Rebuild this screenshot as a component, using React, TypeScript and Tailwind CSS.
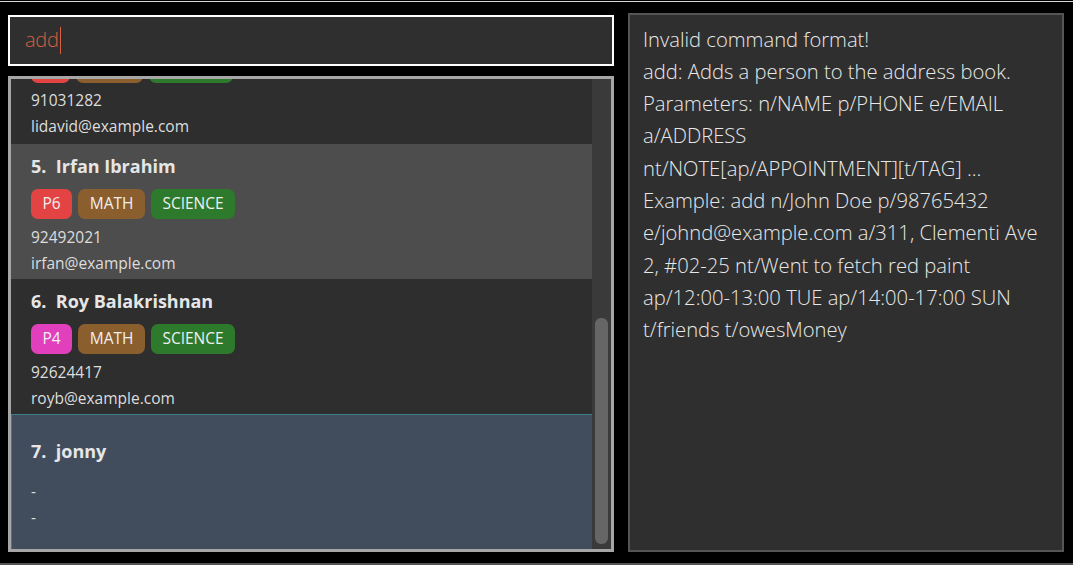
import React, {FC} from "react";

type Tag = {label: string; color: string};

type Person = {
    index: number;
    name: string;
    tags: Tag[];
    phone: string;
    email: string;
    bg: string;
};

const red = "bg-[#e34343]";
const brown = "bg-[#8b5e2e]";
const green = "bg-[#2d7a2d]";
const pink = "bg-[#e23fbc]";

const people: Person[] = [
    {
        index: 5,
        name: "Irfan Ibrahim",
        tags: [
            {label: "P6", color: red},
            {label: "MATH", color: brown},
            {label: "SCIENCE", color: green},
        ],
        phone: "92492021",
        email: "irfan@example.com",
        bg: "bg-[#4d4d4d]",
    },
    {
        index: 6,
        name: "Roy Balakrishnan",
        tags: [
            {label: "P4", color: pink},
            {label: "MATH", color: brown},
            {label: "SCIENCE", color: green},
        ],
        phone: "92624417",
        email: "royb@example.com",
        bg: "bg-[#2e2e2e]",
    },
];

const resultLines = [
    "Invalid command format!",
    "add: Adds a person to the address book.",
    "Parameters: n/NAME p/PHONE e/EMAIL",
    "a/ADDRESS",
    "nt/NOTE[ap/APPOINTMENT][t/TAG] ...",
    "Example: add n/John Doe p/98765432",
    "e/johnd@example.com a/311, Clementi Ave",
    "2, #02-25 nt/Went to fetch red paint",
    "ap/12:00-13:00 TUE ap/14:00-17:00 SUN",
    "t/friends t/owesMoney",
];

const TagRow: FC<{tags: Tag[]; className?: string}> = ({tags, className = ""}) => (
    <div className={`flex gap-[6px] ${className}`}>
        {tags.map((t) => (
            <span
                key={t.label}
                className={`${t.color} h-[30px] px-[11.5px] rounded-[7px] text-[15.5px] text-[#f0f0f0] flex items-center`}
            >
                {t.label}
            </span>
        ))}
    </div>
);

const PersonCard: FC<Person> = ({index, name, tags, phone, email, bg}) => (
    <div className={`${bg} h-[135px] shrink-0 pl-[20px] pt-[9px]`}>
        <div className="text-[18px] font-bold text-[#e6e6e6] leading-[26px]">
            {index}.&nbsp;&nbsp;{name}
        </div>
        <TagRow tags={tags} className="mt-[10px]" />
        <div className="text-[15.5px] text-[#dddddd] leading-[26px] mt-[5px]">{phone}</div>
        <div className="text-[15.5px] text-[#dddddd] leading-[26px]">{email}</div>
    </div>
);

// card 4 is scrolled mostly out of view: only the bottom of its tags shows
const PartialCard: FC = () => (
    <div className="h-[65px] shrink-0 bg-[#2e2e2e] pl-[20px] overflow-hidden">
        <div className="h-[4px] overflow-hidden flex flex-col justify-end">
            <div className="flex gap-[6px] shrink-0">
                <span className={`${red} h-[30px] w-[39px] rounded-[7px]`} />
                <span className={`${brown} h-[30px] w-[67px] rounded-[7px]`} />
                <span className={`${green} h-[30px] w-[84px] rounded-[7px]`} />
            </div>
        </div>
        <div className="text-[15.5px] text-[#dddddd] leading-[26px] mt-[4px]">91031282</div>
        <div className="text-[15.5px] text-[#dddddd] leading-[26px]">lidavid@example.com</div>
    </div>
);

const App: FC = () => {
    return (
        <div className="w-[1073px] h-[565px] bg-black flex flex-col overflow-hidden font-['Open_Sans','Noto_Sans',sans-serif]">
            <div className="h-[1px] bg-black" />
            <div className="h-[2px] bg-[#d8d8d8]" />
            <div className="flex-1 flex pl-[8px] pr-[9px] pt-[11px] pb-[11px] gap-[14px]">
                {/* left column */}
                <div className="w-[606px] flex flex-col">
                    <div className="h-[51px] mt-[2px] border-2 border-white bg-[#2f2f2f] flex items-center pl-[15px]">
                        <span className="text-[20px] font-light text-[#d8603f] tracking-[-0.3px]">add</span>
                        <span className="w-[1px] h-[27px] bg-[#d8603f] ml-[1px]" />
                    </div>
                    <div className="flex-1 mt-[10px] border-[3px] border-[#a6a6a6] bg-[#2e2e2e] flex overflow-hidden">
                        <div className="flex-1 overflow-hidden flex flex-col">
                            <PartialCard />
                            {people.map((p) => (
                                <PersonCard key={p.index} {...p} />
                            ))}
                            <div className="h-[135px] shrink-0 bg-[#414d5d] border-t border-l border-[#3e7d8b] pl-[19px] pt-[23px]">
                                <div className="text-[18px] font-bold text-[#e6e6e6] leading-[26px]">
                                    7.&nbsp;&nbsp;jonny
                                </div>
                                <div className="text-[15.5px] text-[#dddddd] leading-[26px] mt-[14px]">-</div>
                                <div className="text-[15.5px] text-[#dddddd] leading-[26px]">-</div>
                            </div>
                        </div>
                        <div className="w-[19px] bg-[#3a3a3a] flex flex-col pt-[239px] pb-[5px] px-[3px]">
                            <div className="flex-1 rounded-[6px] bg-[#666666]" />
                        </div>
                    </div>
                </div>
                {/* right column */}
                <div className="flex-1 border-2 border-[#555555] bg-[#2f2f2f] pl-[13px] pt-[8px]">
                    {resultLines.map((l, i) => (
                        <div key={i} className="text-[20.2px] font-light text-[#e8e8e8] leading-[32.3px] whitespace-nowrap">
                            {l}
                        </div>
                    ))}
                </div>
            </div>
            <div className="h-[5px] bg-[#555555]" />
        </div>
    );
};

export default App;
